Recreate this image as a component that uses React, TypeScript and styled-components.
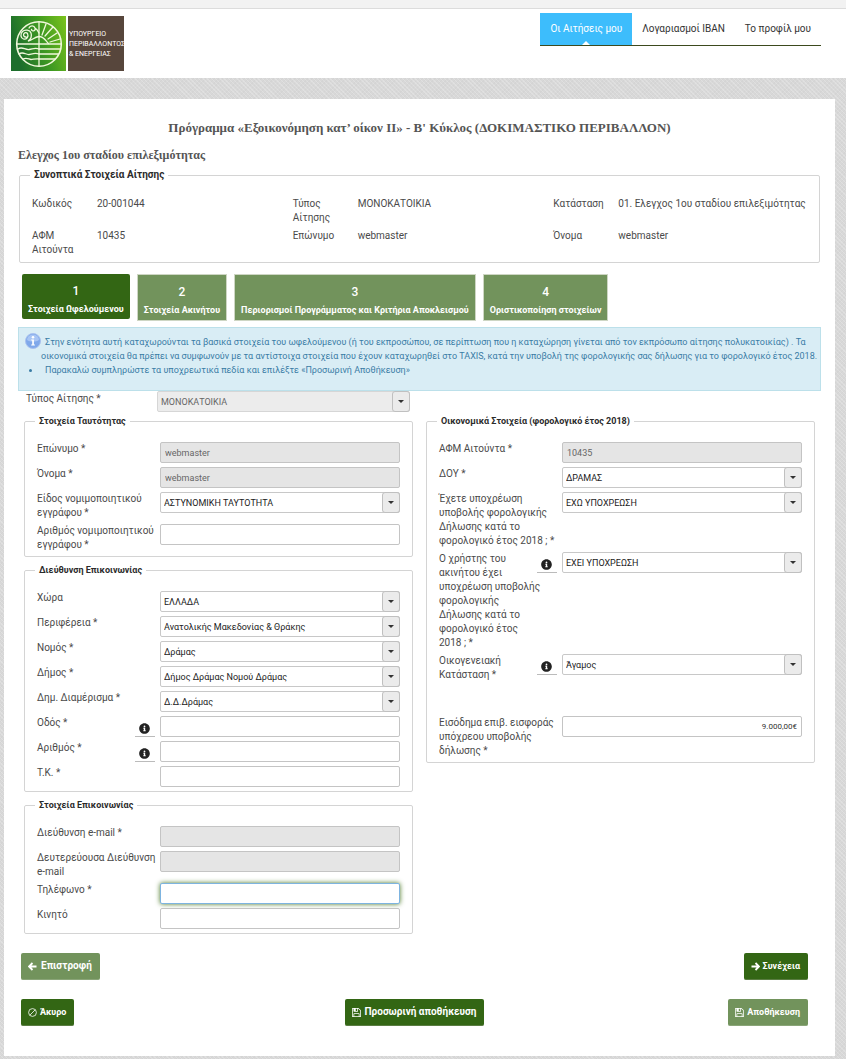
import React, { useId } from "react";
import styled, { createGlobalStyle, css } from "styled-components";
import { FaInfoCircle } from "react-icons/fa";

const GlobalStyle = createGlobalStyle`
  *, *::before, *::after { box-sizing: border-box; }
  body {
    margin: 0;
    font-family: Roboto, "Liberation Sans", sans-serif;
    font-size: 10px;
    line-height: 14px;
    color: #4a4a4a;
    background-color: #d8d8d8;
    background-image:
      repeating-linear-gradient(45deg, rgba(255, 255, 255, 0.2) 0 1px, transparent 1px 3px),
      repeating-linear-gradient(-45deg, rgba(0, 0, 0, 0.02) 0 1px, transparent 1px 3px);
  }
  input, select, button { font-family: inherit; }
`;

const TopStrip = styled.div`
  height: 9px;
  background: #f2f2f2;
  border-bottom: 1px solid #dcdcdc;
`;

const Header = styled.header`
  display: flex;
  justify-content: space-between;
  align-items: flex-start;
  padding: 4px 25px 7px 11px;
  background: #fff;
`;

const Logo = styled.div`
  display: flex;
  gap: 2px;
  height: 55px;
  margin-top: 3px;
`;

const LogoText = styled.div`
  display: flex;
  flex-direction: column;
  justify-content: center;
  width: 56px;
  padding-left: 1px;
  background: #57463c;
  color: #fff;
  font-size: 7px;
  line-height: 10px;
  white-space: nowrap;
`;

const Nav = styled.nav`
  display: flex;
  border-bottom: 1px solid #3d4a1e;
`;

const NavLink = styled.a<{ $active?: boolean }>`
  position: relative;
  padding: 9px 10px;
  color: #333;
  text-decoration: none;
  ${(p) =>
    p.$active &&
    css`
      background: #3dbdfc;
      color: #fff;
      &::after {
        content: "";
        position: absolute;
        left: 50%;
        bottom: 0;
        margin-left: -4px;
        border: 4px solid transparent;
        border-top-width: 0;
        border-bottom-color: #fff;
      }
    `}
`;

const Panel = styled.main`
  margin: 21px 11px 4px 4px;
  padding: 20px 14px 30px;
  background: #fff;
`;

const Title = styled.h1`
  margin: 0;
  font: bold 13px/18px "Roboto Slab", "Liberation Serif", serif;
  text-align: center;
  color: #555;
`;

const Subtitle = styled.h2`
  margin: 11px 0 6px;
  font: bold 12px/14px "Roboto Slab", "Liberation Serif", serif;
  color: #555;
`;

const Group = styled.fieldset<{ $summary?: boolean }>`
  min-width: 0;
  margin: ${(p) => (p.$summary ? "0 1px" : "0")};
  padding: ${(p) => (p.$summary ? "15px 5px 5px 12px" : "14px 12px 4px 12px")};
  border: 1px solid #d4d4d4;
  border-radius: 2px;
`;

const Legend = styled.legend<{ $summary?: boolean }>`
  margin-left: -2px;
  padding: 0 4px;
  font-size: ${(p) => (p.$summary ? 10 : 9)}px;
  font-weight: bold;
  color: #2b2b2b;
`;

const SummaryGrid = styled.dl`
  display: grid;
  grid-template-columns: repeat(3, 1fr);
  gap: 4px 0;
  margin: 0;
`;

const SummaryItem = styled.div`
  display: grid;
  grid-template-columns: 48px 1fr;
  column-gap: 17px;
  dd { margin: 0; }
`;

const Steps = styled.div`
  display: flex;
  align-items: flex-start;
  gap: 7px;
  margin: 11px 4px 6px;
`;

const Step = styled.button<{ $active?: boolean }>`
  display: flex;
  flex-direction: column;
  align-items: center;
  gap: 4px;
  height: ${(p) => (p.$active ? 45 : 47)}px;
  padding: 10px 6px 0;
  border: ${(p) => (p.$active ? "0" : "1px solid #ced6c4")};
  border-radius: ${(p) => (p.$active ? 2 : 0)}px;
  background: ${(p) => (p.$active ? "#336614" : "#72935c")};
  color: #fff;
  font-size: 9px;
  font-weight: bold;
  line-height: 14px;
  white-space: nowrap;
`;

const StepNumber = styled.span`
  font-size: 12px;
  font-weight: 500;
`;

const Notice = styled.ul`
  margin: 0;
  padding: 7px 0 13px 22px;
  border: 1px solid #bce0ea;
  background: #d9edf5;
  color: #3a7ca5;
  font-size: 9px;
  text-indent: 4px;
`;

const NoticeItem = styled.li<{ $plain?: boolean }>`
  list-style: ${(p) => (p.$plain ? "none" : "disc")};
  svg {
    margin: -7px 4px -3px -20px;
    vertical-align: middle;
  }
`;

const TypeRow = styled.div`
  display: grid;
  grid-template-columns: 131px 1fr;
  width: calc(50% - 10px);
  margin-bottom: 2px;
  padding-left: 8px;
  label { padding-top: 1px; }
`;

const Columns = styled.div`
  display: grid;
  grid-template-columns: 1fr 1fr;
  align-items: start;
  gap: 13px;
  padding: 0 6px;
`;

const Stack = styled.div`
  display: grid;
  gap: 6px;
`;

const Rows = styled.div`
  display: grid;
  gap: 4px;
`;

const Row = styled.div<{ $spaced?: boolean }>`
  display: grid;
  grid-template-columns: 123px 1fr;
  align-items: start;
  margin-top: ${(p) => (p.$spaced ? 30 : 0)}px;
`;

const LabelCell = styled.div<{ $narrow?: boolean }>`
  display: flex;
  justify-content: space-between;
  padding-right: ${(p) => (p.$narrow ? 5 : 2)}px;
  label { flex: ${(p) => (p.$narrow ? "0 0 102px" : "1")}; }
`;

const HintButton = styled.button`
  display: flex;
  align-items: flex-end;
  justify-content: center;
  flex: 0 0 20px;
  height: 21px;
  margin-left: -4px;
  padding: 0 2px 2px 0;
  border: 0;
  border-bottom: 1px solid #bbb;
  background: none;
  color: #222;
  font-size: 11px;
`;

const TextInput = styled.input<{ $money?: boolean; $focus?: boolean }>`
  width: 100%;
  height: 21px;
  padding: 0 4px;
  border: 1px solid #c4c4c4;
  border-radius: 2px;
  background: #fff;
  color: #333;
  font-size: ${(p) => (p.$money ? 8 : 9)}px;
  text-align: ${(p) => (p.$money ? "right" : "left")};
  &:disabled {
    background: #e5e5e5;
    color: #666;
  }
  ${(p) =>
    p.$focus &&
    css`
      border-color: #7db4e0;
      box-shadow: 0 0 5px #4f7a2a;
    `}
`;

const SelectBox = styled.div`
  position: relative;
  height: 21px;
`;

const Select = styled.select`
  appearance: none;
  display: block;
  width: 100%;
  height: 21px;
  padding: 0 20px 0 3px;
  border: 1px solid #c8c8c8;
  border-radius: 2px;
  background: #fff;
  color: #222;
  font-size: 9px;
  &:disabled {
    border-color: #d6d6d6;
    background: #ececec;
    color: #666;
    opacity: 1;
  }
`;

const Caret = styled.span`
  position: absolute;
  top: 0;
  right: 0;
  display: flex;
  justify-content: center;
  width: 18px;
  height: 21px;
  padding-top: 8px;
  border: 1px solid #c0c0c0;
  border-radius: 3px;
  background: #ebebeb;
  pointer-events: none;
  &::after {
    content: "";
    height: 3px;
    border: 3px solid transparent;
    border-top-color: #333;
    border-bottom: 0;
  }
`;

const Actions = styled.div`
  display: grid;
  grid-template-columns: 1fr auto 1fr;
  margin: 19px 13px 0 3px;
`;

const ActionButton = styled.button<{ $light?: boolean; $end?: boolean; $small?: boolean }>`
  display: flex;
  align-items: center;
  gap: ${(p) => (p.$small ? 3 : 4)}px;
  justify-self: ${(p) => (p.$end ? "end" : "start")};
  grid-column: ${(p) => (p.$end ? 3 : "auto")};
  height: 27px;
  padding: 0 8px 0 7px;
  border: 0;
  border-bottom: 1px solid ${(p) => (p.$light ? "#8aa578" : "#5a7d42")};
  border-radius: 2px;
  background: ${(p) => (p.$light ? "#72935c" : "#336614")};
  color: #fff;
  font-size: ${(p) => (p.$small ? 9 : 10)}px;
  font-weight: bold;
  line-height: 14px;
  white-space: nowrap;
`;

const Emblem = () => (
  <svg width="55" height="55" viewBox="0 0 55 55" aria-hidden="true">
    <defs>
      <linearGradient id="leaf" x1="0" y1="0.3" x2="1" y2="0">
        <stop offset="0" stopColor="#1d6e2c" />
        <stop offset="0.5" stopColor="#3f9a22" />
        <stop offset="1" stopColor="#7cc31c" />
      </linearGradient>
    </defs>
    <rect width="55" height="55" fill="url(#leaf)" />
    <g fill="none" stroke="#f1f8dc" strokeWidth="1.3" strokeLinecap="round">
      <circle cx="28" cy="28" r="22.3" strokeWidth="1.6" />
      <path d="M28 6v44M6 28h44" />
      <path d="M15 21a2.200 2.200 0 1 1 1.500-3.500c1.500 3-1 6.500-4 5.500s-3.500-5-1-7.500 7.500-1.500 8.500 1.500 0 6-3 8c4-.5 6-4 11-4.500 5 0 6.500 4 9.500 7" />
      <path d="M18 12c1-2.500 5-3 6 0s-3 4-3.500 1.500M24 12c2 1 3 3 4 5" />
      <path d="M31 19l4-11M34 20l8-9M37 23l9-6M39 26l10-3" />
      <path d="M7 33c4-3 7 1 11 0.500s6-2 10-.5M8 38c4-3 7 1 10 .5s6-2 10-.5M12 43c4-2 6 .5 8 .5s5-1 8-.5" />
      <path d="M28 33h21M28 38h19M28 43h16" />
    </g>
  </svg>
);

const InfoBadge = () => (
  <svg width="16" height="16" viewBox="0 0 16 16" aria-hidden="true">
    <circle cx="8" cy="8" r="7.500" fill="#7fa8ea" stroke="#a9c1ee" />
    <path d="M2 7a6 5.500 0 0 1 12 0c-3 2-9 2-12 0z" fill="#a8c5f4" />
    <circle cx="8" cy="4.200" r="1.300" fill="#fff" />
    <path d="M6.200 6.600h2.700v5h1v1H6.200v-1h1v-4h-1z" fill="#fff" />
  </svg>
);

const BanIcon = () => (
  <svg width="9" height="9" viewBox="0 0 9 9" fill="none" stroke="#fff" strokeWidth="0.8" aria-hidden="true">
    <circle cx="4.500" cy="4.500" r="3.900" />
    <path d="M2 7l5-5" />
  </svg>
);

const SaveIcon = () => (
  <svg width="9" height="9" viewBox="0 128 1536 1536" fill="#fff" aria-hidden="true">
    <path d="M384 1536h768v-384h-768v384zM1280 1536h128v-896q0-14-10-38.500t-20-34.500l-281-281q-10-10-34-20t-39-10v416q0 40-28 68t-68 28h-576q-40 0-68-28t-28-68v-416h-128v1280h128v-416q0-40 28-68t68-28h832q40 0 68 28t28 68v416zM896 608v-320q0-13-9.500-22.500t-22.500-9.500h-192q-13 0-22.500 9.500t-9.500 22.500v320q0 13 9.500 22.500t22.500 9.500h192q13 0 22.500-9.500t9.500-22.500zM1536 640v928q0 40-28 68t-68 28h-1344q-40 0-68-28t-28-68v-1344q0-40 28-68t68-28h928q40 0 88 20t76 48l280 280q28 28 48 76t20 88z" />
  </svg>
);

const ArrowIcon = ({ right }: { right?: boolean }) => (
  <svg width="9" height="9" viewBox="0 0 9 9" fill="none" stroke="#fff" strokeWidth="1.800" aria-hidden="true">
    <path d={right ? "M4.500 1L8 4.500 4.500 8M7.500 4.500H.5" : "M4.500 1L1 4.500 4.500 8M1.500 4.500h7"} />
  </svg>
);

type FieldProps = {
  label: string;
  value?: string;
  kind?: "text" | "select";
  disabled?: boolean;
  hint?: boolean;
  money?: boolean;
  focus?: boolean;
  spaced?: boolean;
};

function Dropdown({ id, value, disabled }: { id: string; value: string; disabled?: boolean }) {
  return (
    <SelectBox>
      <Select id={id} disabled={disabled} defaultValue={value}>
        <option>{value}</option>
      </Select>
      <Caret />
    </SelectBox>
  );
}

function Field({ label, value = "", kind = "text", disabled, hint, money, focus, spaced }: FieldProps) {
  const id = useId();
  return (
    <Row $spaced={spaced}>
      <LabelCell $narrow={hint}>
        <label htmlFor={id}>{label}</label>
        {hint && (
          <HintButton type="button" aria-label="Πληροφορίες">
            <FaInfoCircle />
          </HintButton>
        )}
      </LabelCell>
      {kind === "select" ? (
        <Dropdown id={id} value={value} disabled={disabled} />
      ) : (
        <TextInput id={id} defaultValue={value} disabled={disabled} $money={money} $focus={focus} />
      )}
    </Row>
  );
}

function FieldGroup({ title, fields }: { title: string; fields: FieldProps[] }) {
  return (
    <Group>
      <Legend>{title}</Legend>
      <Rows>
        {fields.map((f) => (
          <Field key={f.label} {...f} />
        ))}
      </Rows>
    </Group>
  );
}

const summary = [
  ["Κωδικός", "20-001044"],
  ["Τύπος Αίτησης", "ΜΟΝΟΚΑΤΟΙΚΙΑ"],
  ["Κατάσταση", "01. Ελεγχος 1ου σταδίου επιλεξιμότητας"],
  ["ΑΦΜ Αιτούντα", "10435"],
  ["Επώνυμο", "webmaster"],
  ["Όνομα", "webmaster"],
];

const steps = [
  "Στοιχεία Ωφελούμενου",
  "Στοιχεία Ακινήτου",
  "Περιορισμοί Προγράμματος και Κριτήρια Αποκλεισμού",
  "Οριστικοποίηση στοιχείων",
];

const identity: FieldProps[] = [
  { label: "Επώνυμο *", value: "webmaster", disabled: true },
  { label: "Όνομα *", value: "webmaster", disabled: true },
  { label: "Είδος νομιμοποιητικού εγγράφου *", value: "ΑΣΤΥΝΟΜΙΚΗ ΤΑΥΤΟΤΗΤΑ", kind: "select" },
  { label: "Αριθμός νομιμοποιητικού εγγράφου *" },
];

const address: FieldProps[] = [
  { label: "Χώρα", value: "ΕΛΛΑΔΑ", kind: "select" },
  { label: "Περιφέρεια *", value: "Ανατολικής Μακεδονίας & Θράκης", kind: "select" },
  { label: "Νομός *", value: "Δράμας", kind: "select" },
  { label: "Δήμος *", value: "Δήμος Δράμας Νομού Δράμας", kind: "select" },
  { label: "Δημ. Διαμέρισμα *", value: "Δ.Δ.Δράμας", kind: "select" },
  { label: "Οδός *", hint: true },
  { label: "Αριθμός *", hint: true },
  { label: "Τ.Κ. *" },
];

const contact: FieldProps[] = [
  { label: "Διεύθυνση e-mail *", disabled: true },
  { label: "Δευτερεύουσα Διεύθυνση e-mail", disabled: true },
  { label: "Τηλέφωνο *", focus: true },
  { label: "Κινητό" },
];

const finance: FieldProps[] = [
  { label: "ΑΦΜ Αιτούντα *", value: "10435", disabled: true },
  { label: "ΔΟΥ *", value: "ΔΡΑΜΑΣ", kind: "select" },
  {
    label: "Έχετε υποχρέωση υποβολής φορολογικής Δήλωσης κατά το φορολογικό έτος 2018 ; *",
    value: "ΕΧΩ ΥΠΟΧΡΕΩΣΗ",
    kind: "select",
  },
  {
    label: "Ο χρήστης του ακινήτου έχει υποχρέωση υποβολής φορολογικής Δήλωσης κατά το φορολογικό έτος 2018 ; *",
    value: "ΕΧΕΙ ΥΠΟΧΡΕΩΣΗ",
    kind: "select",
    hint: true,
  },
  { label: "Οικογενειακή Κατάσταση *", value: "Άγαμος", kind: "select", hint: true },
  { label: "Εισόδημα επιβ. εισφοράς υπόχρεου υποβολής δήλωσης *", value: "9.000,00€", money: true, spaced: true },
];

export default function App() {
  return (
    <>
      <GlobalStyle />
      <TopStrip />
      <Header>
        <Logo>
          <Emblem />
          <LogoText>
            <span>ΥΠΟΥΡΓΕΙΟ</span>
            <span>ΠΕΡΙΒΑΛΛΟΝΤΟΣ</span>
            <span>&amp; ΕΝΕΡΓΕΙΑΣ</span>
          </LogoText>
        </Logo>
        <Nav>
          <NavLink href="#applications" $active>Οι Αιτήσεις μου</NavLink>
          <NavLink href="#iban">Λογαριασμοί IBAN</NavLink>
          <NavLink href="#profile">Το προφίλ μου</NavLink>
        </Nav>
      </Header>
      <Panel>
        <Title>Πρόγραμμα «Εξοικονόμηση κατ’ οίκον ΙΙ» - Β' Κύκλος (ΔΟΚΙΜΑΣΤΙΚΟ ΠΕΡΙΒΑΛΛΟΝ)</Title>
        <Subtitle>Ελεγχος 1ου σταδίου επιλεξιμότητας</Subtitle>
        <Group $summary>
          <Legend $summary>Συνοπτικά Στοιχεία Αίτησης</Legend>
          <SummaryGrid>
            {summary.map(([term, text]) => (
              <SummaryItem key={term}>
                <dt>{term}</dt>
                <dd>{text}</dd>
              </SummaryItem>
            ))}
          </SummaryGrid>
        </Group>
        <Steps>
          {steps.map((name, i) => (
            <Step key={name} type="button" $active={i === 0}>
              <StepNumber>{i + 1}</StepNumber>
              <span>{name}</span>
            </Step>
          ))}
        </Steps>
        <Notice>
          <NoticeItem $plain>
            <InfoBadge />
            Στην ενότητα αυτή καταχωρούνται τα βασικά στοιχεία του ωφελούμενου (ή του εκπροσώπου, σε περίπτωση που η
            καταχώρηση γίνεται από τον εκπρόσωπο αίτησης πολυκατοικίας) . Τα οικονομικά στοιχεία θα πρέπει να συμφωνούν
            με τα αντίστοιχα στοιχεία που έχουν καταχωρηθεί στο TAXIS, κατά την υποβολή της φορολογικής σας δήλωσης για
            το φορολογικό έτος 2018.
          </NoticeItem>
          <NoticeItem>Παρακαλώ συμπληρώστε τα υποχρεωτικά πεδία και επιλέξτε «Προσωρινή Αποθήκευση»</NoticeItem>
        </Notice>
        <TypeRow>
          <label htmlFor="request-type">Τύπος Αίτησης *</label>
          <Dropdown id="request-type" value="ΜΟΝΟΚΑΤΟΙΚΙΑ" disabled />
        </TypeRow>
        <Columns>
          <Stack>
            <FieldGroup title="Στοιχεία Ταυτότητας" fields={identity} />
            <FieldGroup title="Διεύθυνση Επικοινωνίας" fields={address} />
            <FieldGroup title="Στοιχεία Επικοινωνίας" fields={contact} />
          </Stack>
          <FieldGroup title="Οικονομικά Στοιχεία (φορολογικό έτος 2018)" fields={finance} />
        </Columns>
        <Actions>
          <ActionButton type="button" $light><ArrowIcon />Επιστροφή</ActionButton>
          <ActionButton type="button" $end $small><ArrowIcon right />Συνέχεια</ActionButton>
        </Actions>
        <Actions>
          <ActionButton type="button" $small><BanIcon />Άκυρο</ActionButton>
          <ActionButton type="button"><SaveIcon />Προσωρινή αποθήκευση</ActionButton>
          <ActionButton type="button" $light $end $small><SaveIcon />Αποθήκευση</ActionButton>
        </Actions>
      </Panel>
    </>
  );
}
